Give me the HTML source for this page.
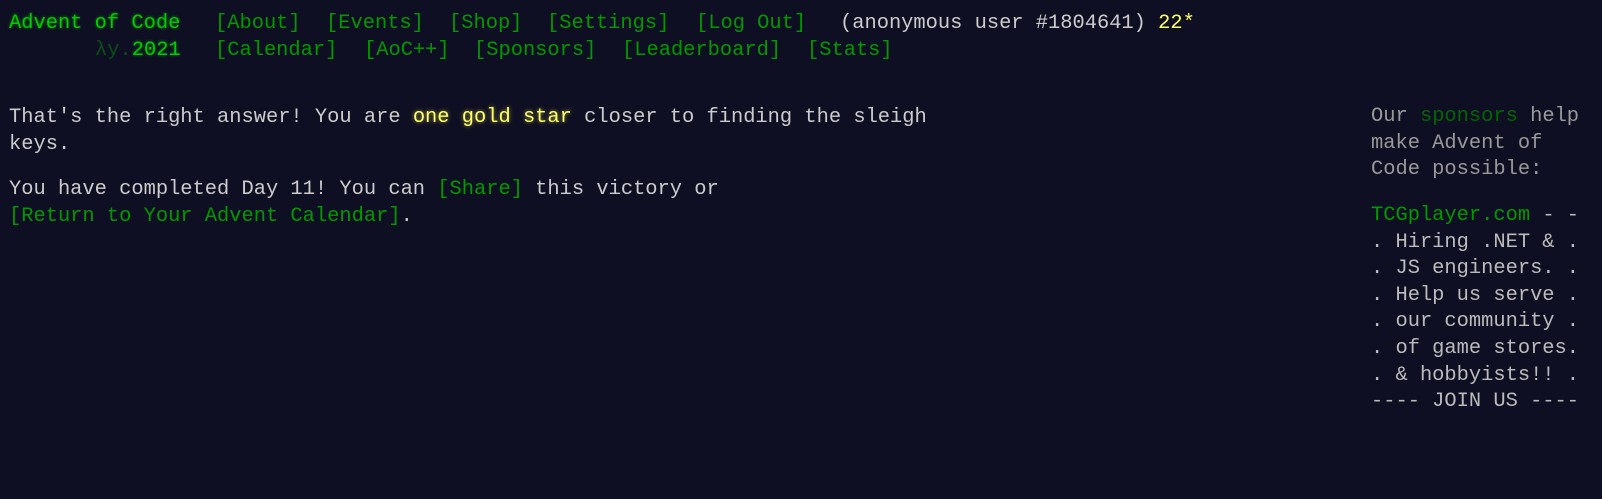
<!DOCTYPE html>
<html><head><meta charset="utf-8"><style>
html,body{margin:0;padding:0;background:#0f0f23;width:1602px;height:499px;overflow:hidden}
body{font-family:"Liberation Mono",monospace;font-size:20.4px;color:#cccccc;white-space:pre;}
.a{position:absolute;line-height:26.6px}
.t{color:#00cc00;text-shadow:0 0 3px rgba(0,204,0,.6)}
.l{color:#009900}
.g{color:#ffff66;text-shadow:0 0 4px rgba(255,255,102,.6)}
.d{color:#ffff66}
.s{color:#999999}
.lam{color:#00cc00;opacity:.33}
</style></head><body>
<div class="a t" style="left:9px;top:11px">Advent of Code</div>
<div class="a l" style="left:215px;top:11px">[About]</div>
<div class="a l" style="left:326px;top:11px">[Events]</div>
<div class="a l" style="left:449px;top:11px">[Shop]</div>
<div class="a l" style="left:547px;top:11px">[Settings]</div>
<div class="a l" style="left:696px;top:11px">[Log Out]</div>
<div class="a" style="left:840px;top:11px">(anonymous user #1804641) <span class="d">22*</span></div>
<div class="a" style="left:95px;top:38px"><span class="lam">λy.</span><span class="t">2021</span></div>
<div class="a l" style="left:215px;top:38px">[Calendar]</div>
<div class="a l" style="left:364px;top:38px">[AoC++]</div>
<div class="a l" style="left:474px;top:38px">[Sponsors]</div>
<div class="a l" style="left:622px;top:38px">[Leaderboard]</div>
<div class="a l" style="left:807px;top:38px">[Stats]</div>
<div class="a" style="left:9px;top:105px">That's the right answer! You are <span class="g">one gold star</span> closer to finding the sleigh
keys.</div>
<div class="a" style="left:9px;top:177px">You have completed Day 11! You can <span class="l">[Share]</span> this victory or
<span class="l">[Return to Your Advent Calendar]</span>.</div>
<div class="a s" style="left:1371px;top:104px">Our <span style="color:#006600">sponsors</span> help
make Advent of
Code possible:</div>
<div class="a" style="left:1371px;top:203px;color:#bbbbbb"><span class="l">TCGplayer.com</span> - -
. Hiring .NET & .
. JS engineers. .
. Help us serve .
. our community .
. of game stores.
. & hobbyists!! .
---- JOIN US ----</div>
</body></html>
